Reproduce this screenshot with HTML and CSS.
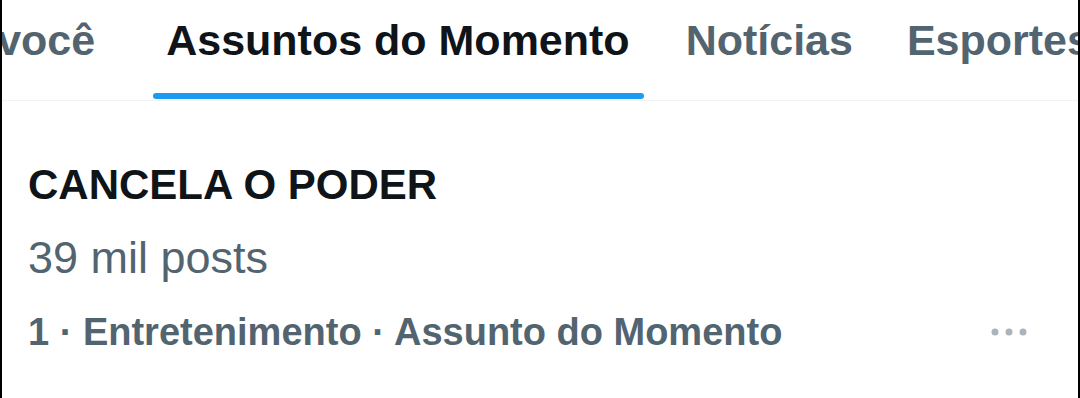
FILE: index.html
```html
<!DOCTYPE html>
<html lang="pt-BR">
<head>
    <meta charset="UTF-8">
    <meta name="viewport" content="width=device-width, initial-scale=1.0">
    <title>Explorar</title>
    <link rel="stylesheet" href="styles.css">
</head>
<body>
    <div class="page">
        <!-- Abas -->
        <nav class="tabs">
            <div class="tab tab-first"><span class="tab-label">Para você</span></div>
            <div class="tab active"><span class="tab-label">Assuntos do Momento</span><span class="indicator"></span></div>
            <div class="tab"><span class="tab-label">Notícias</span></div>
            <div class="tab"><span class="tab-label">Esportes</span></div>
            <div class="tab"><span class="tab-label">Entretenimento</span></div>
        </nav>

        <!-- Assunto -->
        <div class="trend">
            <div class="trend-name">CANCELA O PODER</div>
            <div class="trend-count">39 mil posts</div>
            <div class="trend-meta">
                <span>1 · Entretenimento · Assunto do Momento</span>
                <svg class="more" width="36" height="10" viewBox="0 0 36 10">
                    <circle cx="4" cy="5" r="3.5"></circle>
                    <circle cx="18" cy="5" r="3.5"></circle>
                    <circle cx="32" cy="5" r="3.5"></circle>
                </svg>
            </div>
        </div>
    </div>
</body>
</html>
```

FILE: styles.css
```css
body {
    margin: 0;
    font-family: "Liberation Sans", Arial, sans-serif;
    background-color: #fff;
}

.page {
    height: 398px;
    border-left: 2px solid #000;
    border-right: 2px solid #000;
    overflow: hidden;
    background-color: #fff;
}

.tabs {
    display: flex;
    gap: 30px;
    height: 100px;
    margin-left: -122px;
    border-bottom: 1px solid #eff3f4;
    white-space: nowrap;
}

.tab {
    display: flex;
    flex-direction: column;
    align-items: stretch;
    padding: 0 12px;
    font-size: 43px;
    font-weight: bold;
    color: #536471;
}

.tab-first {
    margin-right: 16px;
}

.tab-label {
    line-height: 80px;
}

.tab.active {
    color: #0f1419;
    padding: 0 14px 0 13px;
}

.indicator {
    margin-top: auto;
    margin-bottom: 1px;
    margin-left: -13px;
    margin-right: -14px;
    height: 6px;
    border-radius: 3px;
    background-color: #1d9bf0;
}

.trend {
    padding: 59px 51px 0 26px;
}

.trend-name {
    font-size: 42px;
    font-weight: bold;
    line-height: 50px;
    color: #0f1419;
}

.trend-count {
    margin-top: 23px;
    font-size: 45px;
    line-height: 50px;
    color: #536471;
}

.trend-meta {
    display: flex;
    justify-content: space-between;
    align-items: center;
    margin-top: 24px;
    font-size: 38px;
    font-weight: bold;
    line-height: 50px;
    color: #536471;
}

.more {
    fill: #aab4bd;
}
```
